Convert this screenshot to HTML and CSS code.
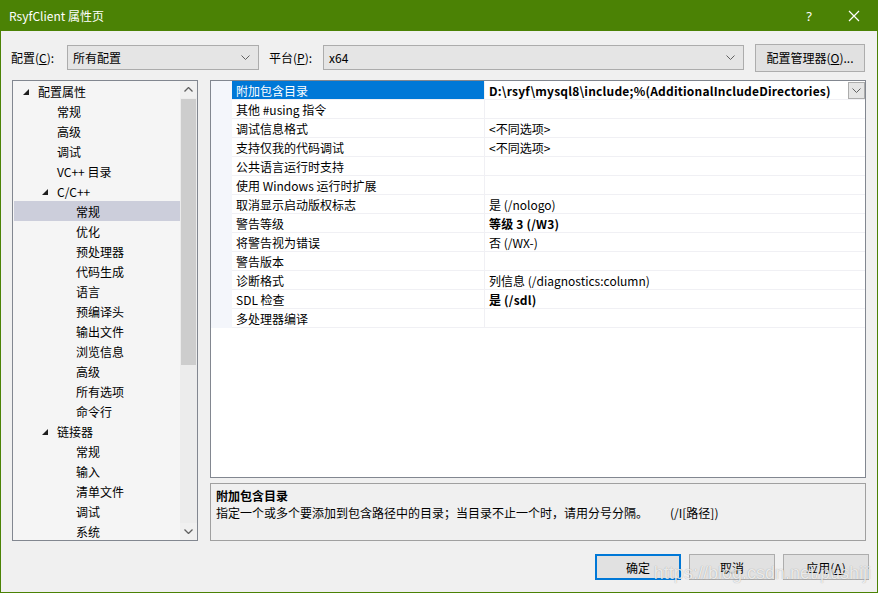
FILE: index.html
```html
<!DOCTYPE html>
<html lang="zh-CN">
<head>
    <meta charset="UTF-8">
    <title>RsyfClient 属性页</title>
    <link rel="stylesheet" href="styles.css">
</head>
<body>
    <div class="window">
        <div class="titlebar">
            <span class="title">RsyfClient 属性页</span>
            <span class="help">?</span>
            <span class="close">
                <svg width="12" height="12" viewBox="0 0 12 12"><path d="M1 1 L11 11 M11 1 L1 11" stroke="#fff" stroke-width="1.2" fill="none"/></svg>
            </span>
        </div>

        <div class="content">
            <div class="toolbar">
                <span class="lbl lbl-config">配置(<u>C</u>):</span>
                <div class="combo combo-config">
                    <span>所有配置</span>
                    <svg class="chev" width="9" height="5" viewBox="0 0 9 5"><path d="M0.5 0.5 L4.5 4.5 L8.5 0.5" stroke="#606060" fill="none"/></svg>
                </div>
                <span class="lbl lbl-platform">平台(<u>P</u>):</span>
                <div class="combo combo-platform">
                    <span>x64</span>
                    <svg class="chev" width="9" height="5" viewBox="0 0 9 5"><path d="M0.5 0.5 L4.5 4.5 L8.5 0.5" stroke="#606060" fill="none"/></svg>
                </div>
                <div class="btn btn-manager">配置管理器(<u>O</u>)...</div>
            </div>

            <div class="main">
                <div class="tree">
                    <div class="tree-list">
                        <div class="tree-item lvl0"><i class="twisty"></i>配置属性</div>
                        <div class="tree-item lvl1">常规</div>
                        <div class="tree-item lvl1">高级</div>
                        <div class="tree-item lvl1">调试</div>
                        <div class="tree-item lvl1">VC++ 目录</div>
                        <div class="tree-item lvl1 open"><i class="twisty"></i>C/C++</div>
                        <div class="tree-item lvl2 selected">常规</div>
                        <div class="tree-item lvl2">优化</div>
                        <div class="tree-item lvl2">预处理器</div>
                        <div class="tree-item lvl2">代码生成</div>
                        <div class="tree-item lvl2">语言</div>
                        <div class="tree-item lvl2">预编译头</div>
                        <div class="tree-item lvl2">输出文件</div>
                        <div class="tree-item lvl2">浏览信息</div>
                        <div class="tree-item lvl2">高级</div>
                        <div class="tree-item lvl2">所有选项</div>
                        <div class="tree-item lvl2">命令行</div>
                        <div class="tree-item lvl1 open"><i class="twisty"></i>链接器</div>
                        <div class="tree-item lvl2">常规</div>
                        <div class="tree-item lvl2">输入</div>
                        <div class="tree-item lvl2">清单文件</div>
                        <div class="tree-item lvl2">调试</div>
                        <div class="tree-item lvl2">系统</div>
                    </div>
                    <div class="scrollbar">
                        <div class="sb-arrow">
                            <svg width="9" height="5" viewBox="0 0 9 5"><path d="M0.5 4.5 L4.5 0.5 L8.5 4.5" stroke="#606060" stroke-width="1.3" fill="none"/></svg>
                        </div>
                        <div class="sb-track">
                            <div class="sb-thumb"></div>
                        </div>
                        <div class="sb-arrow">
                            <svg width="9" height="5" viewBox="0 0 9 5"><path d="M0.5 0.5 L4.5 4.5 L8.5 0.5" stroke="#606060" stroke-width="1.3" fill="none"/></svg>
                        </div>
                    </div>
                </div>

                <div class="right">
                    <div class="grid">
                        <div class="prop-row active">
                            <div class="gutter"></div>
                            <div class="pname">附加包含目录</div>
                            <div class="pval bold">D:\rsyf\mysql8\include;%(AdditionalIncludeDirectories)
                                <span class="drop">
                                    <svg width="9" height="5" viewBox="0 0 9 5"><path d="M0.5 0.5 L4.5 4.5 L8.5 0.5" stroke="#606060" fill="none"/></svg>
                                </span>
                            </div>
                        </div>
                        <div class="prop-row"><div class="gutter"></div><div class="pname">其他 #using 指令</div><div class="pval"></div></div>
                        <div class="prop-row"><div class="gutter"></div><div class="pname">调试信息格式</div><div class="pval">&lt;不同选项&gt;</div></div>
                        <div class="prop-row"><div class="gutter"></div><div class="pname">支持仅我的代码调试</div><div class="pval">&lt;不同选项&gt;</div></div>
                        <div class="prop-row"><div class="gutter"></div><div class="pname">公共语言运行时支持</div><div class="pval"></div></div>
                        <div class="prop-row"><div class="gutter"></div><div class="pname">使用 Windows 运行时扩展</div><div class="pval"></div></div>
                        <div class="prop-row"><div class="gutter"></div><div class="pname">取消显示启动版权标志</div><div class="pval">是 (/nologo)</div></div>
                        <div class="prop-row"><div class="gutter"></div><div class="pname">警告等级</div><div class="pval bold">等级 3 (/W3)</div></div>
                        <div class="prop-row"><div class="gutter"></div><div class="pname">将警告视为错误</div><div class="pval">否 (/WX-)</div></div>
                        <div class="prop-row"><div class="gutter"></div><div class="pname">警告版本</div><div class="pval"></div></div>
                        <div class="prop-row"><div class="gutter"></div><div class="pname">诊断格式</div><div class="pval">列信息 (/diagnostics:column)</div></div>
                        <div class="prop-row"><div class="gutter"></div><div class="pname">SDL 检查</div><div class="pval bold">是 (/sdl)</div></div>
                        <div class="prop-row"><div class="gutter"></div><div class="pname">多处理器编译</div><div class="pval"></div></div>
                    </div>
                    <div class="desc">
                        <div class="desc-title">附加包含目录</div>
                        <div class="desc-text">指定一个或多个要添加到包含路径中的目录；当目录不止一个时，请用分号分隔。<span class="desc-switch">(/I[路径])</span></div>
                    </div>
                </div>
            </div>

            <div class="footer">
                <div class="btn btn-ok">确定</div>
                <div class="btn">取消</div>
                <div class="btn">应用(<u>A</u>)</div>
            </div>
        </div>

        <div class="watermark">https://blog.csdn.net/pushiji</div>
    </div>
</body>
</html>
```

FILE: styles.css
```css
* {
    box-sizing: border-box;
}
body {
    margin: 0;
    padding: 0;
    background-color: #f0f0f0;
    font-family: "Noto Sans CJK SC", "Noto Sans", sans-serif;
    font-size: 12px;
    color: #000;
}
.window {
    position: relative;
    width: 878px;
    height: 593px;
    border: 1px solid #4b8205;
    border-top: none;
    background-color: #f0f0f0;
    overflow: hidden;
}

/* title bar */
.titlebar {
    display: flex;
    align-items: center;
    height: 31px;
    background-color: #4b8205;
    color: #fff;
    padding-left: 8px;
}
.title {
    font-size: 12px;
    line-height: 16px;
}
.help {
    margin-left: auto;
    width: 12px;
    text-align: center;
    font-family: "Noto Sans", sans-serif;
    font-size: 13px;
}
.close {
    display: flex;
    margin-left: 33px;
    margin-right: 17px;
}

/* toolbar */
.toolbar {
    display: flex;
    align-items: center;
    padding: 12px 0 0 10px;
    height: 41px;
}
.lbl {
    line-height: 16px;
}
.lbl-config {
    width: 56px;
}
.lbl-platform {
    width: 54px;
    margin-left: 10px;
}
.combo {
    display: flex;
    align-items: center;
    height: 25px;
    padding: 0 8px 1px 5px;
    background-color: #e5e5e5;
    border: 1px solid #acacac;
}
.combo .chev {
    margin-left: auto;
}
.combo-config {
    width: 192px;
}
.combo-platform {
    width: 421px;
}
.btn {
    display: flex;
    align-items: center;
    justify-content: center;
    height: 26px;
    background-color: #e1e1e1;
    border: 1px solid #adadad;
}
.btn-manager {
    width: 110px;
    height: 28px;
    margin-left: 11px;
}

/* main area */
.main {
    display: flex;
    margin-top: 8px;
    padding-left: 11px;
}
.tree {
    display: flex;
    width: 186px;
    height: 461px;
    border: 1px solid #828790;
    background-color: #f5f5f5;
    overflow: hidden;
}
.tree-list {
    flex: 1;
    padding-left: 1px;
}
.tree-item {
    display: flex;
    align-items: center;
    height: 20px;
    line-height: 16px;
    padding-top: 1px;
    white-space: nowrap;
}
.tree-item.selected {
    background-color: #cccedb;
}
.lvl0 {
    padding-left: 9px;
}
.lvl1 {
    padding-left: 43px;
}
.lvl1.open {
    padding-left: 28px;
}
.lvl2 {
    padding-left: 62px;
}
.twisty {
    display: block;
    width: 15px;
    height: 6px;
    position: relative;
}
.twisty::before {
    content: "";
    position: absolute;
    left: 0;
    top: 0;
    border-style: solid;
    border-width: 0 0 6px 6px;
    border-color: transparent transparent #1e1e1e transparent;
}
.scrollbar {
    display: flex;
    flex-direction: column;
    width: 17px;
    background-color: #ececec;
}
.sb-arrow {
    display: flex;
    align-items: center;
    justify-content: center;
    height: 17px;
    background-color: #f0f0f0;
}
.sb-track {
    flex: 1;
    padding-top: 1px;
}
.sb-thumb {
    width: 15px;
    margin-left: 1px;
    height: 266px;
    background-color: #cdcdcd;
}

/* property grid */
.right {
    display: flex;
    flex-direction: column;
    margin-left: 12px;
    width: 656px;
}
.grid {
    height: 398px;
    border: 1px solid #828790;
    background-color: #fff;
}
.prop-row {
    display: grid;
    grid-template-columns: 21px 253px 1fr;
    height: 19px;
}
.gutter {
    background-color: #f4f6fb;
}
.pname, .pval {
    position: relative;
    line-height: 19px;
    height: 19px;
    padding-left: 4px;
    border-bottom: 1px solid #f0f0f4;
    white-space: nowrap;
    overflow: hidden;
}
.pname {
    border-right: 1px solid #f0f0f4;
}
.bold {
    font-weight: bold;
    letter-spacing: 0.2px;
}
.prop-row.active .pname {
    background-color: #0078d7;
    color: #fff;
}
.drop {
    position: absolute;
    right: 0;
    top: 1px;
    width: 17px;
    height: 17px;
    display: flex;
    align-items: center;
    justify-content: center;
    background-color: #e5e5e5;
    border: 1px solid #acacac;
}
.desc {
    margin-top: 5px;
    height: 58px;
    border: 1px solid #a0a0a0;
    padding: 3px 5px;
    line-height: 17px;
}
.desc-title {
    font-weight: bold;
}
.desc-switch {
    margin-left: 22px;
}

/* buttons */
.footer {
    display: flex;
    justify-content: flex-end;
    gap: 8px;
    margin-top: 13px;
    padding-right: 8px;
}
.footer .btn {
    width: 86px;
}
.btn-ok {
    border: 2px solid #0078d7;
}

.watermark {
    position: absolute;
    right: 6px;
    bottom: 8px;
    font-family: "Liberation Sans", Arial, sans-serif;
    font-size: 18px;
    color: rgba(255, 255, 255, 0.8);
    text-shadow: 0 0 1px rgba(0, 0, 0, 0.35);
    pointer-events: none;
}
```
